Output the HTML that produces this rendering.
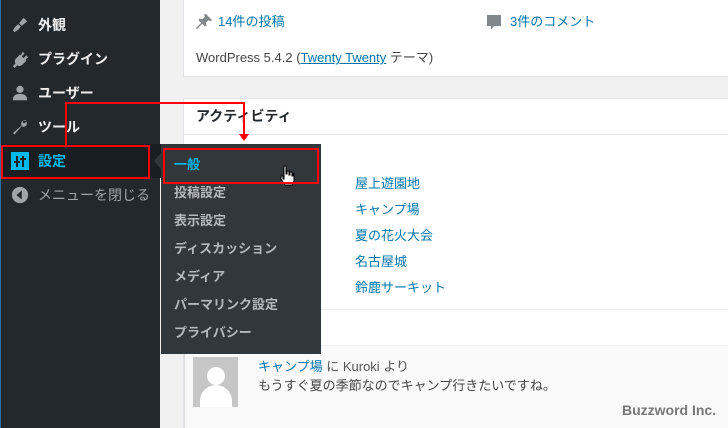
<!DOCTYPE html>
<html><head><meta charset="utf-8"><style>
*{margin:0;padding:0;box-sizing:border-box}
html,body{width:728px;height:428px;overflow:hidden}
body{background:#f1f1f1;font-family:"Liberation Sans","Noto Sans CJK JP",sans-serif;font-size:13px;position:relative}
.a{position:absolute}
#side{left:0;top:0;width:160px;height:428px;background:#23282d;border-left:1px solid #2a6fa8}
.mi{position:absolute;left:37px;color:#eee;font-size:14px;line-height:20px;font-weight:bold}
.ic{position:absolute;left:10px;width:18px;height:18px}
.card{background:#fff;border:1px solid #e2e4e7}
a,.lk{color:#0073aa}
.sub{position:absolute;left:174px;color:#b4b9be;font-size:13px;line-height:20px;font-weight:bold}
.al{position:absolute;left:355px;color:#0073aa;font-size:13px;line-height:20px}
</style></head><body>
<div class="a" id="side">
 <svg class="ic" style="top:16px" viewBox="0 0 20 20"><path fill="#a0a5aa" d="M14 2l4 4-6 5-3-3zM8 9l3 3-2 2c-1 2-3 2-5 4l-2-2c2-2 2-4 4-5z"/></svg>
 <div class="mi" style="top:15px">外観</div>
 <svg class="ic" style="top:50px" viewBox="0 0 20 20"><path fill="#a0a5aa" d="M13 2l2 2-3 3 2 2 3-3 2 2-3 3 1 1-5 5c-2 1-4 1-5 0l-3 3-2-2 3-3c-1-1-1-3 0-5l5-5 1 1z"/></svg>
 <div class="mi" style="top:49px">プラグイン</div>
 <svg class="ic" style="top:84px" viewBox="0 0 20 20"><circle cx="10" cy="6" r="4" fill="#a0a5aa"/><path fill="#a0a5aa" d="M2 18c0-5 3-7 8-7s8 2 8 7z"/></svg>
 <div class="mi" style="top:83px">ユーザー</div>
 <svg class="ic" style="top:118px" viewBox="0 0 20 20"><path fill="#a0a5aa" d="M17 3c-1-1-4-1-5 1-1 1-1 3 0 4l-9 8c-1 1 0 3 1 2l8-9c1 1 3 1 4 0 2-1 2-4 1-5l-2 2-2-1 0-2z"/></svg>
 <div class="mi" style="top:117px">ツール</div>
 <div class="a" style="left:0;top:144px;width:160px;height:34px;background:#191e23"></div>
 <svg class="ic" style="top:152px" viewBox="0 0 18 18"><rect width="18" height="18" fill="#00b9eb"/><path stroke="#191e23" stroke-width="2" d="M6 4v11M12 4v11M3 10h6M9 7h6"/></svg>
 <div class="mi" style="top:151px;color:#00b9eb">設定</div>
 <svg class="ic" style="top:186px" viewBox="0 0 20 20"><circle cx="10" cy="10" r="9" fill="#a0a5aa"/><path fill="#23282d" d="M12 5v10l-6-5z"/></svg>
 <div class="mi" style="top:185px;color:#a0a5aa;font-weight:normal">メニューを閉じる</div>
</div>
<div class="a" style="left:154px;top:153px;width:0;height:0;border-top:8px solid transparent;border-bottom:8px solid transparent;border-right:7px solid #32373c"></div>
<div class="a card" style="left:183px;top:-1px;width:550px;height:78px"></div>
<svg class="a" style="left:195px;top:13px" width="18" height="18" viewBox="0 0 20 20"><path fill="#82878c" d="M12 1l7 7-2 1-2-1-3 3 1 3-2 1-3-3-6 6-1-1 6-6-3-3 1-2 3 1 3-3-1-2z"/></svg>
<div class="a lk" style="left:218px;top:12px;line-height:20px">14件の投稿</div>
<svg class="a" style="left:486px;top:14px" width="16" height="18" viewBox="0 0 16 18"><path fill="#82878c" d="M1 1h14v11h-7l-3 4v-4h-4z"/></svg>
<div class="a lk" style="left:510px;top:12px;line-height:20px">3件のコメント</div>
<div class="a" style="left:196px;top:48px;color:#444;line-height:20px">WordPress 5.4.2 (<u class="lk">Twenty Twenty</u> テーマ)</div>
<div class="a card" style="left:183px;top:98px;width:550px;height:340px"></div>
<div class="a" style="left:184px;top:134px;width:544px;height:1px;background:#e2e4e7"></div>
<div class="a" style="left:196px;top:106px;color:#23282d;font-size:14px;line-height:20px;font-weight:bold">アクティビティ</div>
<div class="al" style="top:174px">屋上遊園地</div>
<div class="al" style="top:200px">キャンプ場</div>
<div class="al" style="top:226px">夏の花火大会</div>
<div class="al" style="top:252px">名古屋城</div>
<div class="al" style="top:278px">鈴鹿サーキット</div>
<div class="a" style="left:184px;top:309px;width:544px;height:1px;background:#eee"></div>
<div class="a" style="left:184px;top:345px;width:544px;height:83px;background:#f9f9f9;border-top:1px solid #eee;border-left:1px solid #ddd"></div>
<div class="a" style="left:193px;top:357px;width:45px;height:50px;background:#c6c6c6;overflow:hidden">
 <div class="a" style="left:14px;top:10px;width:18px;height:18px;border-radius:50%;background:#fff"></div>
 <div class="a" style="left:7px;top:28px;width:32px;height:30px;border-radius:16px 16px 0 0;background:#fff"></div>
</div>
<div class="a" style="left:258px;top:357px;color:#555;line-height:20px"><span class="lk">キャンプ場</span> に Kuroki より</div>
<div class="a" style="left:258px;top:376px;color:#444;line-height:20px">もうすぐ夏の季節なのでキャンプ行きたいですね。</div>
<div class="a" style="left:622px;top:400px;color:#777;font-size:14px;line-height:20px;font-weight:bold">Buzzword Inc.</div>
<div class="a" style="left:161px;top:144px;width:160px;height:210px;background:#32373c"></div>
<div class="sub" style="top:155px;color:#00b9eb">一般</div>
<div class="sub" style="top:183px">投稿設定</div>
<div class="sub" style="top:211px">表示設定</div>
<div class="sub" style="top:239px">ディスカッション</div>
<div class="sub" style="top:267px">メディア</div>
<div class="sub" style="top:295px">パーマリンク設定</div>
<div class="sub" style="top:323px">プライバシー</div>
<svg class="a" style="left:279px;top:165px" width="16" height="22" viewBox="0 0 16 22"><path fill="#fff" stroke="#000" d="M5 1h2v8h1V6h2v4h1V7h2v4h1V9h1v7l-2 4H6l-4-6V11h2v3h1z"/></svg>
<div class="a" style="left:1px;top:145px;width:149px;height:34px;border:2px solid #f00"></div>
<div class="a" style="left:163px;top:148px;width:156px;height:36px;border:2px solid #f00"></div>
<div class="a" style="left:65px;top:102px;width:2px;height:43px;background:#f00"></div>
<div class="a" style="left:65px;top:102px;width:180px;height:2px;background:#f00"></div>
<div class="a" style="left:243px;top:102px;width:2px;height:32px;background:#f00"></div>
<div class="a" style="left:239px;top:134px;width:0;height:0;border-left:5px solid transparent;border-right:5px solid transparent;border-top:7px solid #f00"></div>
</body></html>
